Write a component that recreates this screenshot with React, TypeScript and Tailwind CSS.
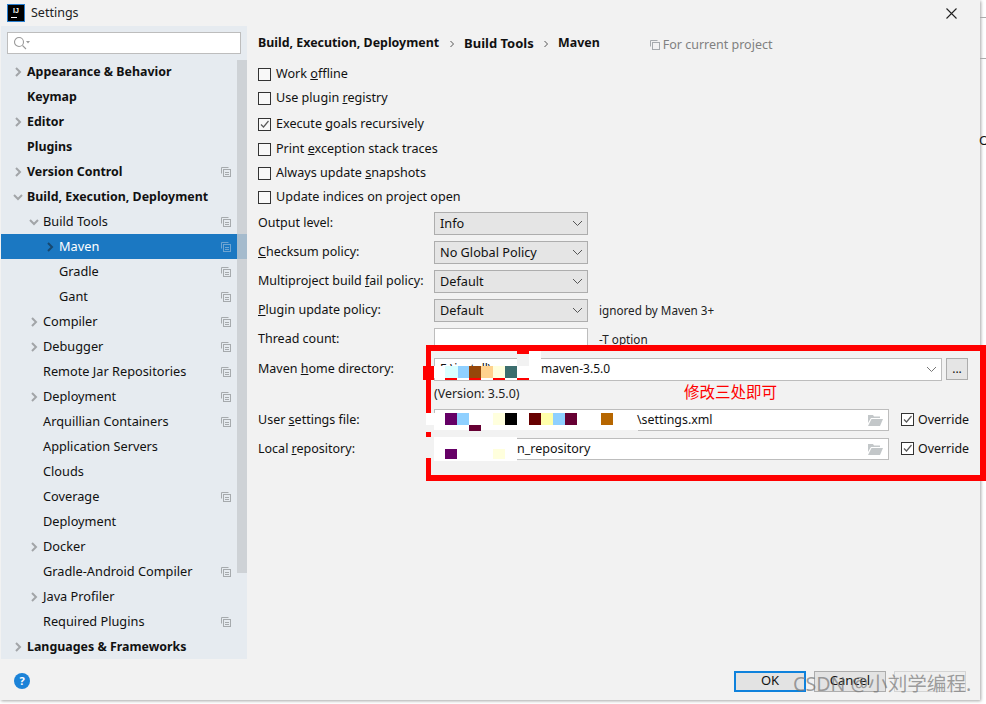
import React from "react";

type Node = { t: string; l: 0 | 1 | 2; b?: boolean; ch?: "r" | "d"; copy?: boolean; sel?: boolean };

const tree: Node[] = [
  { t: "Appearance & Behavior", l: 0, b: true, ch: "r" },
  { t: "Keymap", l: 0, b: true },
  { t: "Editor", l: 0, b: true, ch: "r" },
  { t: "Plugins", l: 0, b: true },
  { t: "Version Control", l: 0, b: true, ch: "r", copy: true },
  { t: "Build, Execution, Deployment", l: 0, b: true, ch: "d" },
  { t: "Build Tools", l: 1, ch: "d", copy: true },
  { t: "Maven", l: 2, ch: "r", copy: true, sel: true },
  { t: "Gradle", l: 2, copy: true },
  { t: "Gant", l: 2, copy: true },
  { t: "Compiler", l: 1, ch: "r", copy: true },
  { t: "Debugger", l: 1, ch: "r", copy: true },
  { t: "Remote Jar Repositories", l: 1, copy: true },
  { t: "Deployment", l: 1, ch: "r", copy: true },
  { t: "Arquillian Containers", l: 1, copy: true },
  { t: "Application Servers", l: 1 },
  { t: "Clouds", l: 1 },
  { t: "Coverage", l: 1, copy: true },
  { t: "Deployment", l: 1 },
  { t: "Docker", l: 1, ch: "r" },
  { t: "Gradle-Android Compiler", l: 1, copy: true },
  { t: "Java Profiler", l: 1, ch: "r" },
  { t: "Required Plugins", l: 1, copy: true },
  { t: "Languages & Frameworks", l: 0, b: true, ch: "r" },
];

function Chevron({ dir, color }: { dir: "r" | "d"; color: string }) {
  return (
    <svg width="10" height="10" viewBox="0 0 10 10" fill="none" stroke={color} strokeWidth="2">
      {dir === "r" ? <path d="M3 1l4 4-4 4" /> : <path d="M1 3l4 4 4-4" />}
    </svg>
  );
}

function CopyIcon({ color }: { color: string }) {
  return (
    <svg width="10" height="10" viewBox="0 0 10 10" fill="none" stroke={color} strokeWidth="1">
      <path d="M7.5 .5h-7v6" />
      <rect x="2.5" y="2.5" width="7" height="7" />
      <path d="M4 5.5h4M4 7.5h4" />
    </svg>
  );
}

function Check() {
  return (
    <svg width="11" height="11" viewBox="0 0 11 11" fill="none" stroke="#5a5a5a" strokeWidth="1.2">
      <path d="M2 5.5l2.5 2.5 5-6" />
    </svg>
  );
}

function CheckRow({ pre, u, post, on, h }: { pre: string; u: string; post: string; on?: boolean; h: string }) {
  return (
    <div className={`flex items-center ${h}`}>
      <span className="flex h-[13px] w-[13px] items-center justify-center border border-[#333] bg-[#f8f8f8]">{on && <Check />}</span>
      <span className="ml-[5px] text-[12.6px] text-[#111]">
        {pre}
        <u>{u}</u>
        {post}
      </span>
    </div>
  );
}

function Label({ pre, u, post }: { pre: string; u: string; post: string }) {
  return (
    <span className="w-[176px] shrink-0 text-[12.5px] text-[#111]">
      {pre}
      <u>{u}</u>
      {post}
    </span>
  );
}

function Select({ v }: { v: string }) {
  return (
    <div className="flex h-[23px] w-[154px] items-center justify-between border border-[#adadad] bg-[#e5e5e5] pl-[5px] pr-[4px] text-[12.7px] text-[#111]">
      <span>{v}</span>
      <svg width="11" height="7" viewBox="0 0 11 7" fill="none" stroke="#555" strokeWidth="1">
        <path d="M1 1l4.5 4.5L10 1" />
      </svg>
    </div>
  );
}

function Folder() {
  return (
    <svg width="15" height="12" viewBox="0 0 15 12" fill="#c3c7c9">
      <path d="M0 1h5l1 1.5h6V4H3L0 9z" />
      <path d="M3.5 5H15l-3 7H0z" />
    </svg>
  );
}

function Override() {
  return (
    <div className="ml-[12px] flex items-center">
      <span className="flex h-[13px] w-[13px] items-center justify-center border border-[#333] bg-white">
        <Check />
      </span>
      <span className="ml-[4px] text-[12.4px] text-[#111]">Override</span>
    </div>
  );
}

function Patch({ c, cls }: { c: string; cls: string }) {
  return <div className={`absolute ${c} ${cls}`} />;
}

export default function App() {
  return (
    <div className="relative h-[704px] w-[986px] overflow-hidden bg-white font-['Noto_Sans','Noto_Sans_CJK_SC',sans-serif]">
      <div className="flex h-[700px] w-[980px] flex-col bg-[#f2f2f2] shadow-[1px_1px_3px_rgba(0,0,0,0.35)]">
        {/* title bar */}
        <div className="flex h-[26px] shrink-0 items-center pl-[8px] pr-[23px]">
          <span className="relative flex h-[16px] w-[16px] items-start justify-center bg-black font-['Liberation_Sans'] text-[7px] font-bold leading-[11px] text-white outline-1 outline-[#2a7fd0]">
            IJ
            <span className="absolute bottom-[3px] left-[3px] h-[1px] w-[6px] bg-white" />
          </span>
          <span className="ml-[7px] text-[12.5px] text-[#222]">Settings</span>
          <svg className="ml-auto" width="11" height="11" viewBox="0 0 11 11" stroke="#222" strokeWidth="1.1">
            <path d="M.5.5l10 10M10.5.5l-10 10" />
          </svg>
        </div>

        <div className="flex h-[633px] shrink-0">
          {/* sidebar */}
          <aside className="relative ml-[1px] flex w-[246px] shrink-0 flex-col bg-[#e6ebf0]">
            <div className="mx-[6px] mt-[6px] flex h-[22px] items-center border border-[#bdbdbd] bg-white pl-[5px]">
              <svg width="18" height="14" viewBox="0 0 18 14" fill="none" stroke="#9a9a9a" strokeWidth="1.1">
                <circle cx="6" cy="6" r="4.5" />
                <path d="M9.5 9.5l3.5 3.5" />
                <path d="M13 5h4l-2 2.5z" fill="#9a9a9a" stroke="none" />
              </svg>
            </div>
            <div className="mt-[5px] flex flex-col">
              {tree.map((n, i) => (
                <div
                  key={i}
                  className={`relative flex h-[25px] items-center ${n.sel ? "bg-[#1b78c2] text-white" : "text-[#111]"} ${
                    n.l === 0 ? "pl-[26px]" : n.l === 1 ? "pl-[42px]" : "pl-[58px]"
                  }`}
                >
                  {n.ch && (
                    <span className={`absolute ${n.l === 0 ? "left-[12px]" : n.l === 1 ? "left-[28px]" : "left-[44px]"}`}>
                      <Chevron dir={n.ch} color={n.sel ? "#17486f" : "#a2a5a8"} />
                    </span>
                  )}
                  <span className={n.b ? "pt-[2px] text-[12.4px] font-bold" : "text-[12.75px]"}>{n.t}</span>
                  {n.copy && (
                    <span className="absolute left-[220px] top-[8px]">
                      <CopyIcon color={n.sel ? "#6fa5d2" : "#a6aaad"} />
                    </span>
                  )}
                </div>
              ))}
            </div>
            <div className="absolute right-0 top-[34px] h-[513px] w-[10px] bg-[#c8ccd0]/80" />
          </aside>

          {/* main */}
          <main className="flex min-w-0 flex-1 flex-col pl-[11px]">
            <div className="flex h-[33px] items-center text-[12.4px] font-bold text-[#111]">
              <span className="pt-[2px]">Build, Execution, Deployment</span>
              <svg className="ml-[10px] mr-[9px] mt-[2px]" width="6" height="8" viewBox="0 0 6 8" fill="none" stroke="#555" strokeWidth="1">
                <path d="M1.5 1l3 3-3 3" />
              </svg>
              <span className="w-[70px] whitespace-nowrap pt-[2px] text-[13px]">Build Tools</span>
              <svg className="mx-[9px] mt-[2px]" width="6" height="8" viewBox="0 0 6 8" fill="none" stroke="#555" strokeWidth="1">
                <path d="M1.5 1l3 3-3 3" />
              </svg>
              <span className="pt-[2px]">Maven</span>
              <span className="ml-[50px] mt-[5px] flex items-center text-[12.5px] font-normal text-[#808080]">
                <svg className="mr-[3px]" width="10" height="10" viewBox="0 0 10 10" fill="none" stroke="#a6aaad" strokeWidth="1">
                  <path d="M7.5 .5h-7v6" />
                  <rect x="2.5" y="2.5" width="7" height="7" />
                </svg>
                For current project
              </span>
            </div>

            <div className="mt-[3px] flex flex-col">
              <CheckRow h="h-[24px]" pre="Work " u="o" post="ffline" />
              <CheckRow h="h-[25px]" pre="Use plugin " u="r" post="egistry" />
              <CheckRow h="h-[26px]" pre="Execute " u="g" post="oals recursively" on />
              <CheckRow h="h-[25px]" pre="Print " u="e" post="xception stack traces" />
              <CheckRow h="h-[23px]" pre="Always update " u="s" post="napshots" />
              <CheckRow h="h-[24px]" pre="Update indices on project open" u="" post="" />
            </div>

            <div className="flex flex-col">
              <div className="flex h-[29px] items-center">
                <Label pre="Output level:" u="" post="" />
                <Select v="Info" />
              </div>
              <div className="flex h-[29px] items-center">
                <Label pre="" u="C" post="hecksum policy:" />
                <Select v="No Global Policy" />
              </div>
              <div className="flex h-[29px] items-center">
                <Label pre="Multiproject build " u="f" post="ail policy:" />
                <Select v="Default" />
              </div>
              <div className="flex h-[29px] items-center">
                <Label pre="" u="P" post="lugin update policy:" />
                <Select v="Default" />
                <span className="ml-[11px] text-[11.7px] text-[#222]">ignored by Maven 3+</span>
              </div>
              <div className="flex h-[29px] items-center">
                <Label pre="Thread count:" u="" post="" />
                <div className="h-[23px] w-[154px] border border-[#bdbdbd] bg-white" />
                <span className="ml-[11px] text-[11.7px] text-[#222]">-T option</span>
              </div>
              <div className="flex h-[30px] items-center">
                <Label pre="Maven " u="h" post="ome directory:" />
                <div className="flex h-[23px] w-[508px] items-center justify-between border border-[#bdbdbd] bg-white pl-[5px] pr-[4px] text-[12px] text-[#111]">
                  <span className="flex">
                    <span className="inline-block w-[101px] whitespace-nowrap">E:\install\</span>
                    <span>maven-3.5.0</span>
                  </span>
                  <svg width="11" height="7" viewBox="0 0 11 7" fill="none" stroke="#777" strokeWidth="1">
                    <path d="M1 1l4.5 4.5L10 1" />
                  </svg>
                </div>
                <div className="ml-[4px] flex h-[22px] w-[22px] items-center justify-center border border-[#adadad] bg-[#e5e5e5] text-[12px] leading-[14px] text-[#111]">
                  ...
                </div>
              </div>
              <div className="flex h-[20px] items-center pl-[176px] text-[12.4px] text-[#222]">(Version: 3.5.0)</div>
              <div className="flex h-[32px] items-center">
                <Label pre="User " u="s" post="ettings file:" />
                <div className="flex h-[22px] w-[455px] items-center justify-between border border-[#bdbdbd] bg-white pl-[5px] pr-[5px] text-[12.4px] text-[#111]">
                  <span className="flex">
                    <span className="inline-block w-[197px]" />
                    <span>\settings.xml</span>
                  </span>
                  <Folder />
                </div>
                <Override />
              </div>
              <div className="flex h-[26px] items-center">
                <Label pre="Local " u="r" post="epository:" />
                <div className="flex h-[22px] w-[455px] items-center justify-between border border-[#bdbdbd] bg-white pl-[5px] pr-[5px] text-[12.5px] text-[#111]">
                  <span className="flex">
                    <span className="inline-block w-[77px]" />
                    <span>n_repository</span>
                  </span>
                  <Folder />
                </div>
                <Override />
              </div>
            </div>
          </main>
        </div>

        {/* footer */}
        <div className="flex flex-1 items-center pl-[14px] pr-[14px] pt-[3px] text-[13px] text-[#111]">
          <span className="flex h-[16px] w-[16px] items-center justify-center rounded-full bg-[#1c83d8] text-[11px] font-bold text-white">?</span>
          <div className="ml-auto flex gap-[8px]">
            <div className="flex h-[21px] w-[72px] items-center justify-center border-2 border-[#0f82dc] bg-[#e3e3e3]">OK</div>
            <div className="flex h-[21px] w-[72px] items-center justify-center border border-[#adadad] bg-[#e3e3e3]">Cancel</div>
            <div className="h-[21px] w-[72px] border border-[#d5d5d5] bg-[#efefef]" />
          </div>
        </div>
      </div>

      {/* ---- annotations drawn over the screenshot ---- */}
      <div className="absolute left-[426px] top-[345px] h-[136px] w-[560px] border-y-[6px] border-l-[5px] border-r-[6px] border-[#ff0000]" />
      <span className="absolute left-[684px] top-[380px] font-['Noto_Sans_CJK_SC',sans-serif] text-[15.5px] leading-[22px] text-[#ff0000]">修改三处即可</span>

      {/* redaction squares: row 1 */}
      <Patch c="bg-[#ff0000]" cls="left-[423px] top-[366px] h-[14px] w-[11px]" />
      <Patch c="bg-[#ff0000]" cls="left-[445px] top-[378px] h-[2px] w-[12px]" />
      <Patch c="bg-[#ff0000]" cls="left-[469px] top-[378px] h-[2px] w-[12px]" />
      <Patch c="bg-[#ff0000]" cls="left-[493px] top-[378px] h-[2px] w-[12px]" />
      <Patch c="bg-[#ff0000]" cls="left-[517px] top-[378px] h-[2px] w-[12px]" />
      <Patch c="bg-[#ff0000]" cls="left-[517px] top-[350px] h-[4px] w-[12px]" />
      <Patch c="bg-white" cls="left-[529px] top-[351px] h-[27px] w-[12px]" />
      <Patch c="bg-[#f2f2f2]" cls="left-[517px] top-[354px] h-[12px] w-[12px]" />
      <Patch c="bg-white" cls="left-[517px] top-[366px] h-[12px] w-[12px]" />
      <Patch c="bg-white" cls="left-[434px] top-[366px] h-[12px] w-[11px]" />
      <Patch c="bg-[#d9ffff]" cls="left-[445px] top-[366px] h-[12px] w-[13px]" />
      <Patch c="bg-[#8fd0ff]" cls="left-[458px] top-[366px] h-[12px] w-[11px]" />
      <Patch c="bg-[#96470a]" cls="left-[469px] top-[366px] h-[12px] w-[12px]" />
      <Patch c="bg-[#ffd28e]" cls="left-[481px] top-[366px] h-[12px] w-[12px]" />
      <Patch c="bg-[#ffffdd]" cls="left-[493px] top-[366px] h-[12px] w-[12px]" />
      <Patch c="bg-[#3c6e6e]" cls="left-[505px] top-[366px] h-[12px] w-[12px]" />

      {/* redaction squares: row 2 */}
      <Patch c="bg-white" cls="left-[426px] top-[413px] h-[12px] w-[208px]" />
      <Patch c="bg-[#f2f2f2]" cls="left-[426px] top-[425px] h-[7px] w-[212px]" />
      <Patch c="bg-white" cls="left-[434px] top-[425px] h-[5px] w-[204px]" />
      <Patch c="bg-[#660066]" cls="left-[445px] top-[413px] h-[12px] w-[12px]" />
      <Patch c="bg-[#8fd0ff]" cls="left-[457px] top-[413px] h-[12px] w-[12px]" />
      <Patch c="bg-[#ffffdd]" cls="left-[493px] top-[413px] h-[12px] w-[12px]" />
      <Patch c="bg-black" cls="left-[505px] top-[413px] h-[12px] w-[12px]" />
      <Patch c="bg-[#660000]" cls="left-[529px] top-[413px] h-[12px] w-[12px]" />
      <Patch c="bg-[#ffffaa]" cls="left-[541px] top-[413px] h-[12px] w-[12px]" />
      <Patch c="bg-[#8fd0ff]" cls="left-[553px] top-[413px] h-[12px] w-[12px]" />
      <Patch c="bg-[#660033]" cls="left-[565px] top-[413px] h-[12px] w-[12px]" />
      <Patch c="bg-[#b66600]" cls="left-[601px] top-[413px] h-[12px] w-[12px]" />
      <Patch c="bg-[#660033]" cls="left-[469px] top-[425px] h-[6px] w-[12px]" />

      {/* redaction squares: row 3 */}
      <Patch c="bg-[#f2f2f2]" cls="left-[426px] top-[437px] h-[21px] w-[8px]" />
      <Patch c="bg-white" cls="left-[434px] top-[437px] h-[24px] w-[83px]" />
      <Patch c="bg-[#660066]" cls="left-[445px] top-[449px] h-[10px] w-[12px]" />
      <Patch c="bg-[#ffffdd]" cls="left-[493px] top-[449px] h-[10px] w-[12px]" />

      {/* neighbouring window peeking out on the right */}
      <div className="absolute left-[980px] top-[17px] h-[1px] w-[6px] bg-[#aaa]" />
      <div className="absolute left-[980px] top-[58px] h-[1px] w-[6px] bg-[#aaa]" />
      <span className="absolute left-[979px] top-[132px] text-[13px] leading-[16px] text-[#111]">O</span>

      {/* watermark */}
      <span className="absolute left-[793px] top-[670px] whitespace-nowrap font-['Noto_Sans','Noto_Sans_CJK_SC',sans-serif] text-[19.6px] leading-[28px] text-[#777]/70">
        CSDN @小刘学编程.
      </span>
    </div>
  );
}
